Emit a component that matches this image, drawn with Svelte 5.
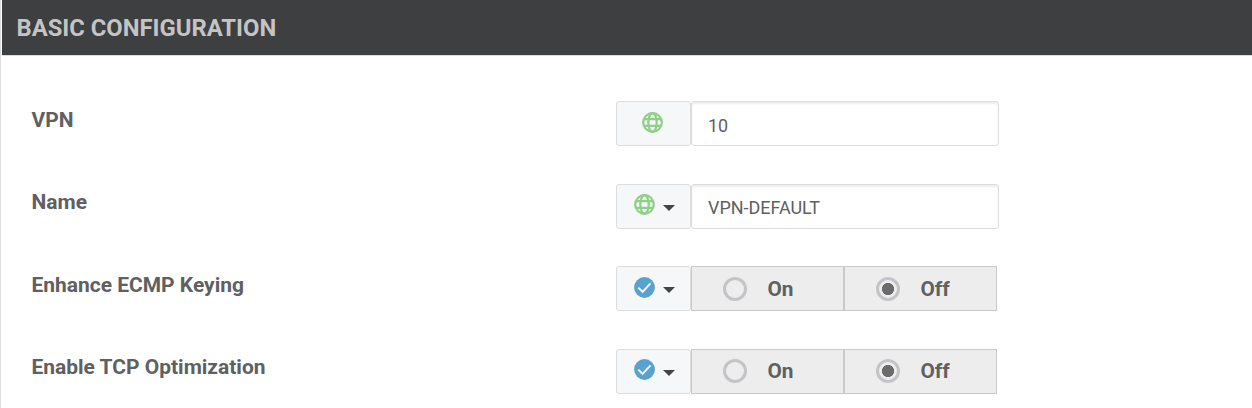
<script>
  const rows = [
    { label: 'VPN', icon: 'globe', menu: false, value: '10' },
    { label: 'Name', icon: 'globe', menu: true, value: 'VPN-DEFAULT' },
    { label: 'Enhance ECMP Keying', icon: 'check', menu: true, toggle: 'Off' },
    { label: 'Enable TCP Optimization', icon: 'check', menu: true, toggle: 'Off' }
  ];
</script>

<section class="panel">
  <header><h2>Basic Configuration</h2></header>
  <div class="rows">
    {#each rows as row}
      <div class="row">
        <div class="label">{row.label}</div>
        <div class="scope" class:menu={row.menu}>
          {#if row.icon === 'globe'}
            <svg class="icon" viewBox="0 0 21 21" fill="none" stroke="#90cf86" stroke-width="2.2">
              <circle cx="10.5" cy="10.5" r="9.3" />
              <ellipse cx="10.5" cy="10.5" rx="4.2" ry="9.3" />
              <path d="M2 7.2h17M2 13.8h17" />
            </svg>
          {:else}
            <svg class="icon" viewBox="0 0 21 21" fill="none">
              <circle cx="10.5" cy="10.5" r="10.4" fill="#58a2cf" />
              <path d="M4.3 10.6l4.3 4.2 7.9-8.5" stroke="#f5f7fa" stroke-width="1.9" />
            </svg>
          {/if}
          {#if row.menu}<span class="caret"></span>{/if}
        </div>
        {#if row.toggle}
          <div class="toggle">
            {#each ['On', 'Off'] as option}
              <div class="option">
                <span class="radio" class:selected={option === row.toggle}></span>
                <span>{option}</span>
              </div>
            {/each}
          </div>
        {:else}
          <div class="field">{row.value}</div>
        {/if}
      </div>
    {/each}
  </div>
</section>

<style>
  :global(body) {
    background: #fff;
    overflow: hidden;
  }
  .panel {
    box-sizing: border-box;
    height: 408px;
    padding-left: 1px;
    border-left: 1px solid #ddd;
    overflow: hidden;
    font-family: Roboto, sans-serif;
    color: #606060;
  }
  header {
    box-sizing: border-box;
    height: 56px;
    padding-left: 14.5px;
    background: #3e3f41;
    border-bottom: 1px solid #ddd;
  }
  h2 {
    margin: 0;
    font-size: 23.8px;
    line-height: 56px;
    font-weight: 700;
    text-transform: uppercase;
    color: #c4c4c4;
  }
  .rows {
    display: grid;
    grid-auto-rows: 45px;
    row-gap: 37.6px;
    padding-top: 45px;
  }
  .row {
    display: grid;
    grid-template-columns: 584.5px 75px 308px;
    grid-template-rows: 45px;
    padding-left: 29.5px;
  }
  .label {
    padding-top: 0.6px;
    font-size: 20.98px;
    line-height: 36px;
    font-weight: 700;
  }
  .scope {
    box-sizing: border-box;
    display: flex;
    align-items: center;
    padding-left: 25px;
    background: #f5f7f9;
    border: 1px solid #ddd;
    border-radius: 3px;
  }
  .menu {
    padding-left: 17px;
  }
  .icon {
    width: 21px;
    height: 21px;
    margin-top: -3px;
  }
  .caret {
    margin: 3px 0 0 8px;
    border: 6px solid transparent;
    border-top-color: #444;
    border-bottom: 0;
  }
  .field {
    box-sizing: border-box;
    padding: 0.6px 0 0 16px;
    border: 1px solid #ddd;
    border-radius: 3px;
    box-shadow: inset 0 2px 2px #eee;
    font-size: 17.95px;
    line-height: 46px;
  }
  .toggle {
    display: flex;
    width: 306px;
  }
  .option {
    box-sizing: border-box;
    display: flex;
    align-items: center;
    width: 153px;
    padding-left: 31px;
    background: #ededed;
    border: 1px solid #c9c9c9;
    font-size: 20.8px;
    font-weight: 700;
  }
  .radio {
    box-sizing: border-box;
    width: 24px;
    height: 24px;
    margin-right: 20.5px;
    border: 3px solid #c3c4c8;
    border-radius: 50%;
  }
  .selected {
    background: radial-gradient(circle, #6b6b6b 5.7px, transparent 6.5px);
  }
</style>
